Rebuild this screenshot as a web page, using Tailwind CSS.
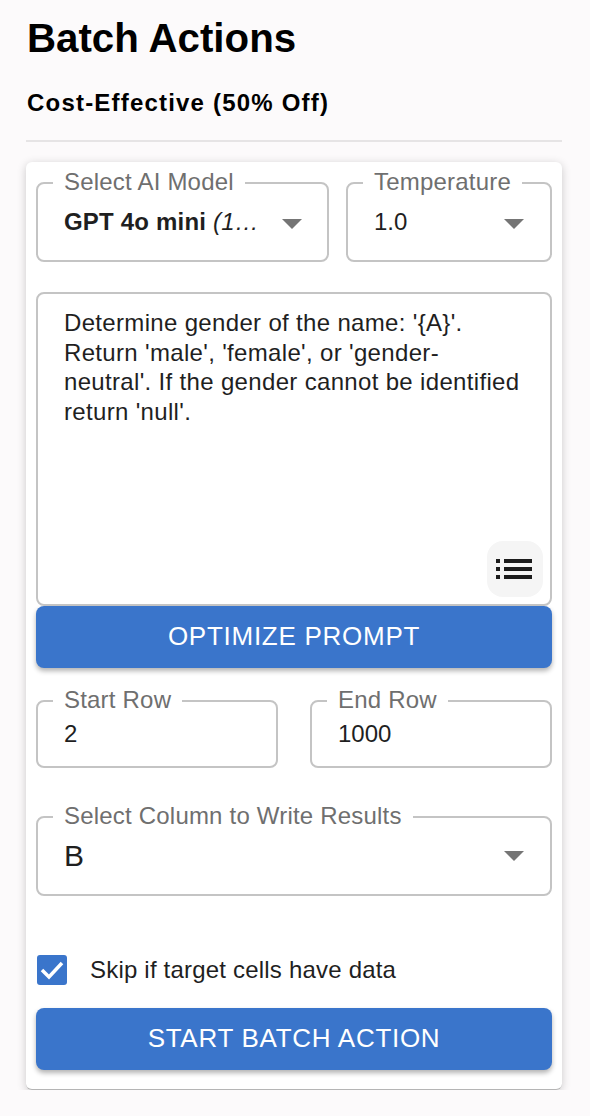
<!DOCTYPE html>
<html lang="en">
<head>
    <meta charset="UTF-8">
    <meta name="viewport" content="width=device-width, initial-scale=1.0">
    <title>Batch Actions</title>
    <script src="https://cdn.jsdelivr.net/npm/@tailwindcss/browser@4"></script>
</head>
<body class="bg-[#fcfafb] font-['Liberation_Sans',Arial,sans-serif] w-[590px] h-[1116px] overflow-hidden">
    <div class="pl-[26px] pr-[28px] pt-[16px]">
        <h1 class="text-[40.25px] leading-[46px] font-bold text-black pl-px">Batch Actions</h1>
        <h2 class="mt-[28px] text-[24px] leading-[26px] font-bold text-black tracking-[1.2px] pl-px">Cost-Effective (50% Off)</h2>
        <hr class="mt-[24px] border-0 h-[2px] bg-[#e6e4e5]">

        <!-- Main card, shadow is cut off under the bottom edge -->
        <div class="-mx-[20px] px-[20px] pt-[20px] overflow-hidden">
        <div class="bg-white rounded-[6px] h-[928px] px-[10px] pt-[20px] border-b border-[#b5b5b5] shadow-[0_2px_10px_rgba(0,0,0,0.2)]">
            <!-- Model + temperature -->
            <div class="flex gap-[17px]">
                <div class="relative w-[293px] h-[80px] border-2 border-[#c4c4c4] rounded-[8px] pl-[26px] pr-[24px] flex items-start">
                    <span class="absolute left-[15px] -top-[15px] bg-white px-[11px] text-[24px] tracking-[0.2px] leading-[26px] text-[#6f6f6f]">Select AI Model</span>
                    <span class="mt-[24px] text-[24px] tracking-[0.2px] leading-[28px] text-[#1f1f1f] font-bold whitespace-nowrap">GPT 4o mini <em class="font-normal">(1…</em></span>
                    <svg class="absolute right-[25px] top-[35px] w-[20px] h-[10px]" viewBox="0 0 20 10"><path d="M0 0h20L10 10z" fill="#757575"/></svg>
                </div>
                <div class="relative w-[206px] h-[80px] border-2 border-[#c4c4c4] rounded-[8px] pl-[26px] flex items-start">
                    <span class="absolute left-[15px] -top-[15px] bg-white px-[11px] text-[24px] tracking-[0.2px] leading-[26px] text-[#6f6f6f]">Temperature</span>
                    <span class="mt-[24px] text-[24px] leading-[28px] text-[#1f1f1f]">1.0</span>
                    <svg class="absolute right-[26px] top-[35px] w-[20px] h-[10px]" viewBox="0 0 20 10"><path d="M0 0h20L10 10z" fill="#757575"/></svg>
                </div>
            </div>

            <!-- Prompt -->
            <div class="relative mt-[30px] h-[314px] border-2 border-[#c4c4c4] rounded-[8px] pl-[26px] pr-[24px] pt-[14px] text-[24px] tracking-[0.33px] leading-[29.5px] text-[#1f1f1f]">
                <p>Determine gender of the name: '{A}'.<br>Return 'male', 'female', or 'gender-<br>neutral'. If the gender cannot be identified<br>return 'null'.</p>
                <button class="absolute right-[7px] bottom-[7px] w-[56px] h-[56px] rounded-[16px] bg-[#f5f5f5] flex items-center justify-center">
                    <svg class="w-[36px] h-[36px] mr-[2px]" viewBox="0 0 36 36" fill="#1c1c1c"><path d="M0 8h4v4H0zM0 16h4v4H0zM0 24h4v4H0zM8 8h28v4H8zM8 16h28v4H8zM8 24h28v4H8z"/></svg>
                </button>
            </div>
            <button class="w-full h-[62px] pb-[2px] rounded-[8px] bg-[#3a75cb] text-white text-[26px] tracking-[0.73px] shadow-[0_3px_5px_rgba(0,0,0,0.3)]">OPTIMIZE PROMPT</button>

            <!-- Row range -->
            <div class="mt-[32px] flex gap-[32px]">
                <div class="relative w-[242px] h-[68px] border-2 border-[#c4c4c4] rounded-[8px] pl-[26px] pt-[17px] text-[24px] leading-[30px] text-[#1f1f1f]">
                    <span class="absolute left-[15px] -top-[15px] bg-white px-[11px] tracking-[0.2px] leading-[26px] text-[#6f6f6f]">Start Row</span>
                    2
                </div>
                <div class="relative w-[242px] h-[68px] border-2 border-[#c4c4c4] rounded-[8px] pl-[26px] pt-[17px] text-[24px] leading-[30px] text-[#1f1f1f]">
                    <span class="absolute left-[15px] -top-[15px] bg-white px-[11px] tracking-[0.2px] leading-[26px] text-[#6f6f6f]">End Row</span>
                    1000
                </div>
            </div>

            <!-- Target column -->
            <div class="relative mt-[48px] h-[80px] border-2 border-[#c4c4c4] rounded-[8px] pl-[26px] pt-[20px] text-[30px] leading-[36px] text-[#1f1f1f]">
                <span class="absolute left-[15px] -top-[15px] bg-white px-[11px] text-[24px] tracking-[0.2px] leading-[26px] text-[#6f6f6f]">Select Column to Write Results</span>
                B
                <svg class="absolute right-[26px] top-[33px] w-[20px] h-[10px]" viewBox="0 0 20 10"><path d="M0 0h20L10 10z" fill="#757575"/></svg>
            </div>

            <!-- Skip checkbox -->
            <label class="mt-[59px] flex items-center h-[30px] pl-px">
                <span class="w-[30px] h-[30px] rounded-[3px] bg-[#3a75cb] flex items-center justify-center">
                    <svg class="w-[24px] h-[20px]" viewBox="0 0 24 20" fill="none" stroke="#fff" stroke-width="3.500"><path d="M2 10l7 7L22 3"/></svg>
                </span>
                <span class="ml-[23px] text-[24px] tracking-[0.2px] text-[#1f1f1f]">Skip if target cells have data</span>
            </label>

            <button class="mt-[23px] w-full h-[62px] pb-[2px] rounded-[8px] bg-[#3a75cb] text-white text-[26px] tracking-[0.72px] shadow-[0_3px_5px_rgba(0,0,0,0.3)]">START BATCH ACTION</button>
        </div>
        </div>
    </div>
</body>
</html>
